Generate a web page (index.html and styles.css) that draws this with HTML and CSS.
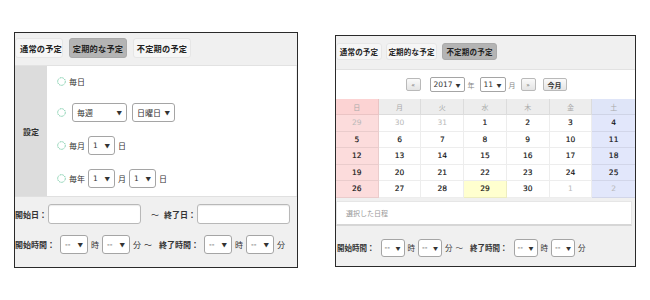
FILE: index.html
```html
<!DOCTYPE html>
<html lang="ja">
<head>
<meta charset="utf-8">
<title>予定</title>
<link rel="stylesheet" href="styles.css">
</head>
<body>
<div class="page">
  <div class="panel left">
    <div class="tabs">
      <span class="tab t1">通常の予定</span>
      <span class="tab t2 active">定期的な予定</span>
      <span class="tab t3">不定期の予定</span>
    </div>
    <div class="setting">
      <div class="label">設定</div>
      <div class="opts">
        <div class="opt first">
          <svg class="radio" viewBox="0 0 9 9"><circle cx="4.5" cy="4.5" r="3.8"/></svg>
          <span>毎日</span>
        </div>
        <div class="opt">
          <svg class="radio" viewBox="0 0 9 9"><circle cx="4.5" cy="4.5" r="3.8"/></svg>
          <span class="sel s-week"><span>毎週</span><i>▼</i></span>
          <span class="sel s-wday"><span>日曜日</span><i>▼</i></span>
        </div>
        <div class="opt">
          <svg class="radio" viewBox="0 0 9 9"><circle cx="4.5" cy="4.5" r="3.8"/></svg>
          <span>毎月</span>
          <span class="sel s-num"><span class="num">1</span><i>▼</i></span>
          <span>日</span>
        </div>
        <div class="opt">
          <svg class="radio" viewBox="0 0 9 9"><circle cx="4.5" cy="4.5" r="3.8"/></svg>
          <span>毎年</span>
          <span class="sel s-num"><span class="num">1</span><i>▼</i></span>
          <span>月</span>
          <span class="sel s-num"><span class="num">1</span><i>▼</i></span>
          <span>日</span>
        </div>
      </div>
    </div>
    <div class="bottom">
      <div class="row r-date">
        <b>開始日：</b>
        <span class="inp"></span>
        <span class="tilde">～</span>
        <b class="end">終了日：</b>
        <span class="inp"></span>
      </div>
      <div class="row r-time">
        <b>開始時間：</b>
        <span class="sel s-t a"><span class="num">--</span><i>▼</i></span>
        <span>時</span>
        <span class="sel s-t"><span class="num">--</span><i>▼</i></span>
        <span>分</span>
        <span>～</span>
        <b class="end">終了時間：</b>
        <span class="sel s-t a"><span class="num">--</span><i>▼</i></span>
        <span>時</span>
        <span class="sel s-t"><span class="num">--</span><i>▼</i></span>
        <span>分</span>
      </div>
    </div>
  </div>

  <div class="panel right">
    <div class="tabs">
      <span class="tab u1">通常の予定</span>
      <span class="tab u2">定期的な予定</span>
      <span class="tab u3 active">不定期の予定</span>
    </div>
    <div class="nav">
      <span class="btn arrow">«</span>
      <span class="sel s-year"><span class="num">2017</span><i>▼</i></span>
      <span class="unit">年</span>
      <span class="sel s-mon"><span class="num">11</span><i>▼</i></span>
      <span class="unit">月</span>
      <span class="btn arrow">»</span>
      <span class="btn today">今月</span>
    </div>
    <div class="cal">
      <span class="h sun">日</span><span class="h">月</span><span class="h">火</span><span class="h">水</span><span class="h">木</span><span class="h">金</span><span class="h sat">土</span>
      <span class="d sun o">29</span><span class="d o">30</span><span class="d o">31</span><span class="d">1</span><span class="d">2</span><span class="d">3</span><span class="d sat">4</span>
      <span class="d sun">5</span><span class="d">6</span><span class="d">7</span><span class="d">8</span><span class="d">9</span><span class="d">10</span><span class="d sat">11</span>
      <span class="d sun">12</span><span class="d">13</span><span class="d">14</span><span class="d">15</span><span class="d">16</span><span class="d">17</span><span class="d sat">18</span>
      <span class="d sun">19</span><span class="d">20</span><span class="d">21</span><span class="d">22</span><span class="d">23</span><span class="d">24</span><span class="d sat">25</span>
      <span class="d sun">26</span><span class="d">27</span><span class="d">28</span><span class="d today-c">29</span><span class="d">30</span><span class="d o">1</span><span class="d sat o">2</span>
    </div>
    <div class="rbottom">
      <div class="chosen">選択した日程</div>
      <div class="row r-time2">
        <b>開始時間：</b>
        <span class="sel s-t2 a"><span class="num">--</span><i>▼</i></span>
        <span>時</span>
        <span class="sel s-t2"><span class="num">--</span><i>▼</i></span>
        <span>分</span>
        <span>～</span>
        <b class="end">終了時間：</b>
        <span class="sel s-t2 a"><span class="num">--</span><i>▼</i></span>
        <span>時</span>
        <span class="sel s-t2"><span class="num">--</span><i>▼</i></span>
        <span>分</span>
      </div>
    </div>
  </div>
</div>
</body>
</html>
```
FILE: styles.css
```css
* { box-sizing: border-box; }
html, body { margin: 0; padding: 0; background: #fff; }
body {
  font-family: "Noto Sans CJK JP", "DejaVu Sans", sans-serif;
  font-size: 8px;
  color: #333;
  width: 650px;
  height: 300px;
  overflow: hidden;
}
b { font-weight: bold; }
.page { display: flex; align-items: flex-start; }

.panel {
  border: 1px solid #2a2a2a;
  background: #f0f0f0;
  display: flex;
  flex-direction: column;
}
.panel.left { width: 284px; height: 236px; margin: 32px 0 0 14px; }
.panel.right { width: 301px; height: 232px; margin: 35px 0 0 37px; font-size: 7.5px; }

/* tabs */
.tabs {
  display: flex;
  align-items: flex-start;
  border-bottom: 1px solid #e2e2e2;
}
.left .tabs { height: 33px; padding-top: 5px; gap: 6px; }
.right .tabs { height: 34px; padding-top: 7px; gap: 4px; }
.tab {
  display: flex;
  align-items: center;
  justify-content: center;
  font-weight: bold;
  background: #f6f6f6;
  border: 1px solid #e6e6e6;
  border-radius: 3px;
  color: #222;
  white-space: nowrap;
  letter-spacing: 0.2px;
}
.left .tab { height: 20px; font-size: 8.2px; }
.right .tab { height: 17px; font-size: 7.5px; }
.tab.active { background: #b4b4b4; border-color: #aaa; }
.t1 { width: 48px; padding-left: 4px; }
.t2, .t3 { width: 58px; }
.u1 { width: 46px; }
.u2 { width: 51px; }
.u3 { width: 55px; margin-left: 1px; }

/* setting area */
.setting {
  display: flex;
  height: 131px;
  border-bottom: 1px solid #e0e0e0;
}
.setting .label {
  width: 32px;
  background: #dcdcdc;
  display: flex;
  align-items: center;
  justify-content: center;
  font-weight: bold;
  padding-top: 1px;
}
.opts {
  flex: 1;
  background: #fff;
  margin-right: 1px;
  display: flex;
  flex-direction: column;
  padding-left: 10px;
}
.opt { display: flex; align-items: center; height: 33px; gap: 3px; }
.opt.first { height: 30px; }
.radio { width: 9px; height: 9px; flex: none; }
.radio circle { fill: none; stroke: #5fc196; stroke-width: 1; stroke-dasharray: 1.3 1; }
.opt .s-week { margin-left: 3px; }
.opt .s-wday { margin-left: 2px; }

/* select-like boxes */
.sel {
  display: inline-flex;
  align-items: center;
  justify-content: space-between;
  background: #fff;
  border: 1px solid #a5a5a5;
  border-radius: 3px;
  padding: 0 4px 0 4px;
  height: 19px;
  flex: none;
}
.sel i { font-style: normal; font-size: 5.5px; color: #333; }
.num { font-family: "DejaVu Sans", sans-serif; font-size: 7.5px; }
.s-week { width: 55px; }
.s-wday { width: 43px; }
.s-num { width: 27px; }
.s-t { width: 28px; }
.s-year { width: 35px; height: 15px; padding: 0 3px; border-radius: 2px; }
.s-mon { width: 26px; height: 15px; padding: 0 3px; border-radius: 2px; }
.s-t2 { width: 24px; height: 18px; padding: 0 3px; }
.s-year i, .s-mon i, .s-t2 i { font-size: 5px; }

/* bottom left */
.bottom { flex: 1; padding-top: 7px; display: flex; flex-direction: column; gap: 11px; }
.row { display: flex; align-items: center; white-space: nowrap; }
.r-date { height: 20px; }
.r-date .inp {
  width: 93px;
  height: 20px;
  background: #fff;
  border: 1px solid #b8b8b8;
  border-radius: 3px;
  box-shadow: inset 0 1px 1px rgba(0,0,0,0.08);
  margin-left: 1px;
}
.r-date .tilde { margin: 0 5px 0 10px; }
.r-time { height: 19px; gap: 3px; }
.r-time .a { margin-left: 2px; }
.r-time .end, .r-time2 .end { margin-left: 4px; }

/* right nav */
.nav {
  height: 29px;
  background: #fff;
  display: flex;
  align-items: center;
  justify-content: center;
  padding-left: 1px;
}
.btn {
  display: inline-flex;
  align-items: center;
  justify-content: center;
  height: 13px;
  background: linear-gradient(#fafafa, #e4e4e4);
  border: 1px solid #b9b9b9;
  border-radius: 2px;
  color: #555;
  font-size: 7px;
}
.btn.arrow { width: 15px; font-size: 6px; font-family: "DejaVu Sans", sans-serif; }
.btn.today { width: 24px; font-weight: bold; color: #333; font-size: 7px; }
.nav .s-year { margin-left: 9px; }
.nav .unit { color: #888; margin: 0 5px 0 3px; font-size: 7px; }
.nav .today { margin-left: 7px; }

/* calendar */
.cal {
  display: grid;
  grid-template-columns: repeat(7, 1fr);
  grid-template-rows: 16px repeat(5, 16.5px);
  background: #fff;
}
.cal span {
  display: flex;
  align-items: center;
  justify-content: center;
  border-right: 1px solid rgba(0,0,0,0.07);
  border-bottom: 1px solid rgba(0,0,0,0.07);
}
.cal span:nth-child(7n) { border-right: none; }
.cal .h { background: #ededed; color: #aaa; font-size: 7px; }
.cal .h.sun { background: #fcd3d3; }
.cal .h.sat { background: #dfe5f8; }
.cal .d { font-family: "DejaVu Sans", sans-serif; font-size: 7.5px; font-weight: normal; color: #111; -webkit-text-stroke: 0.15px #111; }
.cal .d.sun { background: #fcdcdc; }
.cal .d.sat { background: #e2e7fb; }
.cal .d.o { color: #b8b8b8; -webkit-text-stroke: 0; }
.cal .d.today-c { background: #ffffcf; }

/* right bottom */
.rbottom { flex: 1; padding-top: 3px; display: flex; flex-direction: column; }
.chosen {
  width: 296px;
  height: 25px;
  background: #fff;
  border: 1px solid #e6e6e6;
  border-bottom: 2px solid #d6d6d6;
  color: #999;
  display: flex;
  align-items: center;
  padding-left: 9px;
  font-size: 7px;
}
.r-time2 { height: 18px; margin-top: 13px; gap: 3px; padding-left: 1px; }
.r-time2 .a { margin-left: 3px; }
```
